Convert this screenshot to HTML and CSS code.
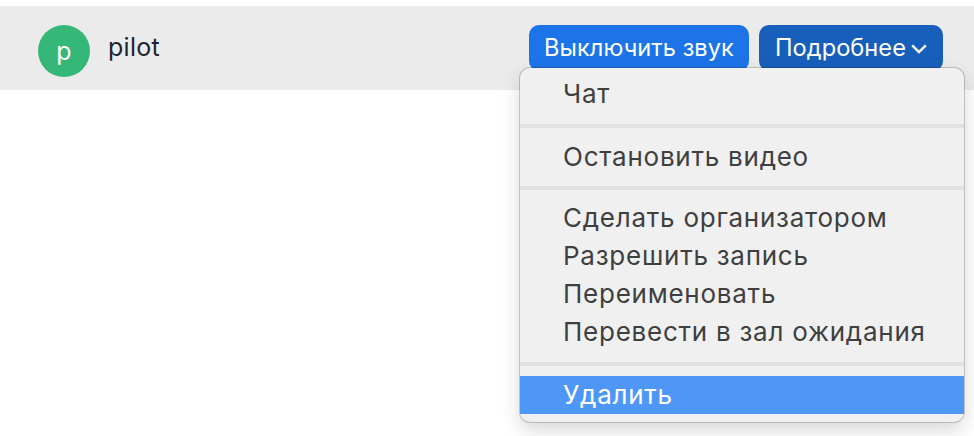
FILE: index.html
```html
<!DOCTYPE html>
<html lang="ru">
<head>
<meta charset="utf-8">
<title>Участник</title>
<link rel="stylesheet" href="styles.css">
</head>
<body>
<div class="row">
  <div class="who">
    <span class="avatar">p</span>
    <span class="name">pilot</span>
  </div>
  <div class="actions">
    <button class="btn btn-mute">Выключить звук</button>
    <button class="btn btn-more">Подробнее<svg class="chev" viewBox="0 0 16 10" width="16" height="10"><path d="M1.200 1.300 8 8.100l6.800-6.800" fill="none" stroke="#fff" stroke-width="2.400"/></svg></button>
  </div>
</div>
<div class="menu">
  <div class="item">Чат</div>
  <div class="sep"></div>
  <div class="item">Остановить видео</div>
  <div class="sep sep-tight"></div>
  <div class="item">Сделать организатором</div>
  <div class="item">Разрешить запись</div>
  <div class="item">Переименовать</div>
  <div class="item">Перевести в зал ожидания</div>
  <div class="sep"></div>
  <div class="item active">Удалить</div>
</div>
</body>
</html>
```
FILE: styles.css
```css
* { box-sizing: border-box; }
html, body { margin: 0; height: 100%; background: #fff; overflow: hidden; }
body { padding-top: 6px; font-family: Inter, "Noto Sans", sans-serif; position: relative; }
.row {
  height: 84px;
  background: #ebebeb;
  display: flex;
  justify-content: space-between;
  padding: 19px 31px 0 38px;
}
.who { display: flex; align-items: flex-start; gap: 18px; }
.avatar {
  width: 52px; height: 52px; border-radius: 50%;
  background: #35b877; color: #fff;
  display: flex; align-items: center; justify-content: center;
  font-size: 25px; line-height: 1;
}
.name { font-size: 25px; line-height: 44px; letter-spacing: .3px; color: #23232f; }
.actions { display: flex; gap: 10px; }
.btn {
  height: 46px; border: 0; border-radius: 10px; color: #fff;
  font: 400 23.6px/46px Inter, "Noto Sans", sans-serif;
  letter-spacing: .05px;
  padding: 0; display: flex; justify-content: center; align-items: flex-start;
}
.btn-mute { width: 220px; background: #1c74e8; }
.btn-more { width: 184px; background: #175fbb; }
.chev { margin: 19px 0 0 5px; }
.menu {
  position: absolute; left: 520px; top: 68px; width: 444px; height: 354px;
  padding: 7px 0 8px;
  background: #f0f0f0;
  border-radius: 10px;
  box-shadow: 0 0 0 1px rgba(0,0,0,.18), 0 8px 20px rgba(0,0,0,.16);
  color: #3f3f3f;
}
.item { height: 38px; padding-left: 43px; font-size: 26px; line-height: 37px; letter-spacing: .75px; }
.sep { height: 4px; margin: 11px 0 10px; background: #e2e2e2; }
.sep-tight { margin: 10px 0 9px; }
.active { background: #4f97f7; color: #fff; }
```
